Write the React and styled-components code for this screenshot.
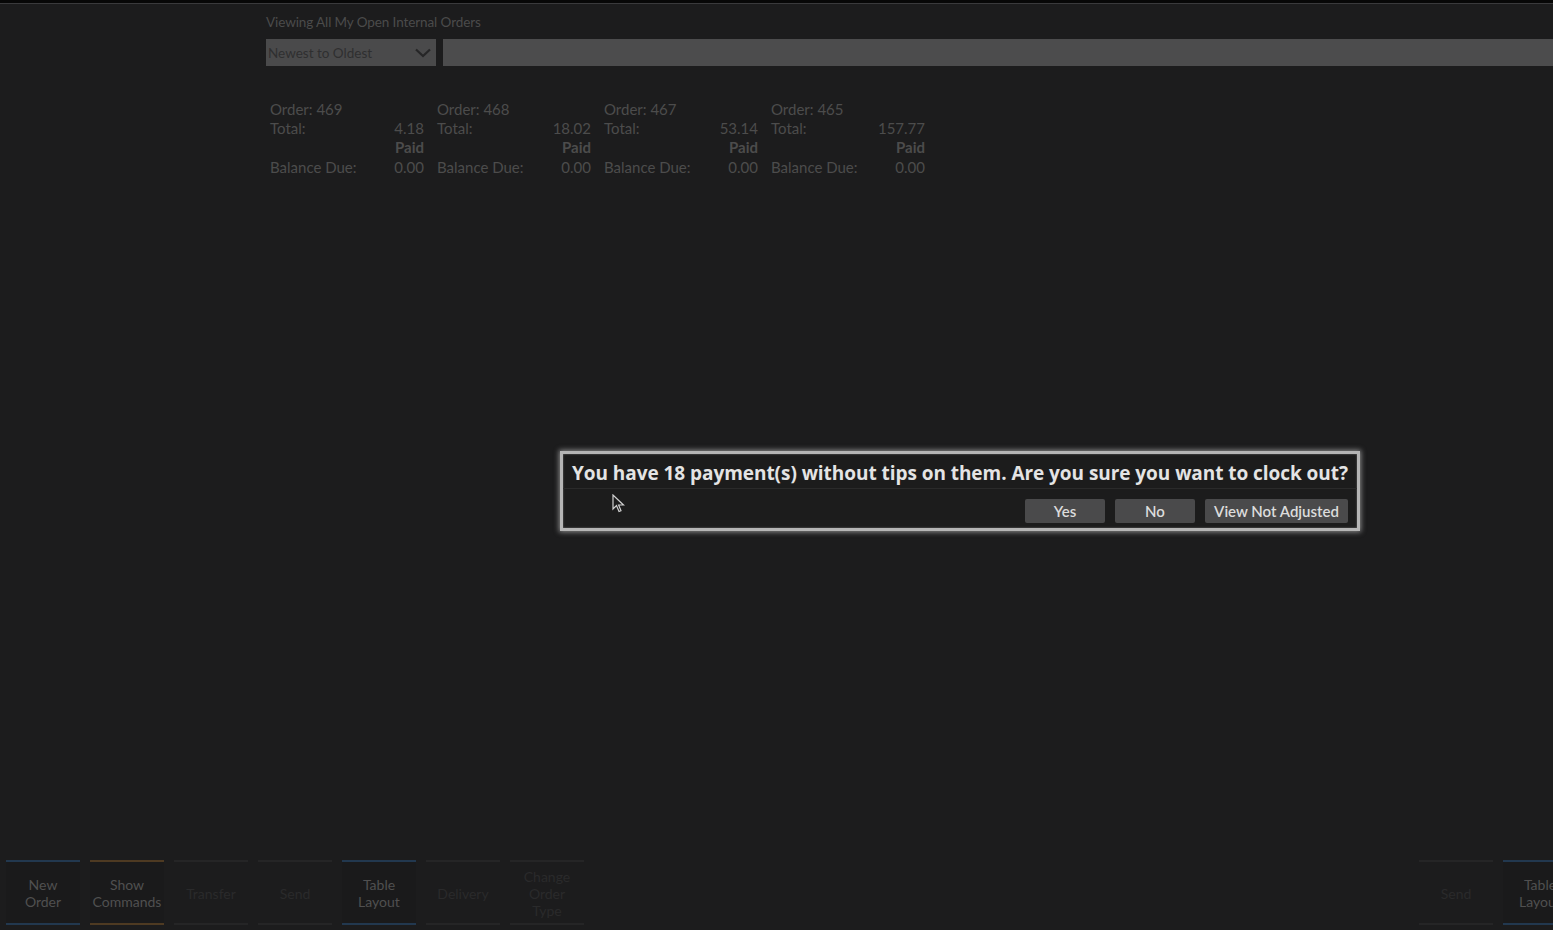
import React from "react";
import styled, { createGlobalStyle } from "styled-components";

const Global = createGlobalStyle`
  html, body { margin: 0; padding: 0; background: #1c1c1d; }
  body { font-family: "Lato", "Open Sans", sans-serif; overflow: hidden; }
  #root { height: 930px; }
`;

const Page = styled.div`
  position: relative;
  height: 930px;
  display: flex;
  flex-direction: column;
  background: #1c1c1d;
`;

const TopStrip = styled.div`
  height: 3px;
  background: #070707;
  border-bottom: 1px solid #3a3a3c;
  flex: none;
`;

const Body = styled.div`
  flex: 1;
  display: flex;
  min-height: 0;
`;

const Sidebar = styled.div`
  width: 266px;
  flex: none;
`;

const Main = styled.div`
  flex: 1;
  display: flex;
  flex-direction: column;
  padding-top: 11px;
`;

const Caption = styled.div`
  font-size: 13.5px;
  color: #4b4b4b;
  height: 20px;
  line-height: 14px;
  letter-spacing: -0.1px;
`;

const FilterRow = styled.div`
  display: flex;
  gap: 7px;
  height: 27px;
  margin-top: 4px;
`;

const Select = styled.div`
  width: 170px;
  flex: none;
  background: #4a4a4b;
  display: flex;
  align-items: center;
  justify-content: space-between;
  padding: 0 4px 0 2px;
  box-sizing: border-box;
  font-size: 13.5px;
  color: #2f2f30;
`;

const SearchBar = styled.div`
  flex: 1;
  background: #4c4c4d;
`;

const Orders = styled.div`
  display: flex;
  gap: 13px;
  padding: 34px 0 0 4px;
`;

const Card = styled.div`
  width: 154px;
  font-size: 15px;
  color: #4c4c4c;
  line-height: 19px;
`;

const CardRow = styled.div`
  display: flex;
  justify-content: space-between;
  height: ${(p) => (p.$tall ? "20px" : "19px")};
  font-weight: ${(p) => (p.$bold ? 700 : 400)};
`;

const Toolbar = styled.div`
  height: 68px;
  display: flex;
  justify-content: space-between;
  padding: 0 0 2px 6px;
  overflow: hidden;
  flex: none;
`;

const Group = styled.div`
  display: flex;
  gap: 10px;
  margin-right: ${(p) => p.$shift || "0"};
`;

const ToolButton = styled.div`
  width: 74px;
  height: 65px;
  box-sizing: border-box;
  border-top: 2px solid ${(p) => p.$line};
  border-bottom: 2px solid ${(p) => p.$line};
  display: flex;
  align-items: center;
  justify-content: center;
  text-align: center;
  font-size: 14px;
  line-height: 17px;
  padding-top: 1px;
  color: ${(p) => (p.$dim ? "#2a2a2b" : "#505050")};
  background: ${(p) => (p.$dim ? "transparent" : "#1a1a1b")};
`;

const Overlay = styled.div`
  position: absolute;
  left: 560px;
  top: 451px;
  width: 800px;
  height: 80px;
  box-sizing: border-box;
  border: 3px solid #b5b5b5;
  box-shadow: 0 0 5px 1px rgba(230, 230, 230, 0.55), inset 0 0 2px rgba(255,255,255,0.4);
  background: #1c1c1c;
  display: flex;
  flex-direction: column;
`;

const DialogTitle = styled.div`
  height: 35px;
  border-bottom: 1px solid #2a2a2a;
  display: flex;
  align-items: center;
  justify-content: center;
  font-family: "Open Sans", "Lato", sans-serif;
  font-weight: 700;
  font-size: 19px;
  color: #e4e4e4;
  letter-spacing: -0.05px;
  padding-top: 3px;
  box-sizing: border-box;
  white-space: nowrap;
`;

const DialogButtons = styled.div`
  display: flex;
  justify-content: flex-end;
  gap: 10px;
  padding: 10px 9px 0 0;
`;

const DialogButton = styled.div`
  height: 24px;
  min-width: ${(p) => p.$w || "80px"};
  padding: 0 8px;
  box-sizing: border-box;
  background: #4a4a4b;
  border-radius: 2px;
  color: #dcdcdc;
  font-size: 15px;
  font-weight: 600;
  display: flex;
  align-items: center;
  justify-content: center;
`;

const Cursor = styled.svg`
  position: absolute;
  left: 612px;
  top: 494px;
`;

const orders = [
  { id: 469, total: "4.18" },
  { id: 468, total: "18.02" },
  { id: 467, total: "53.14" },
  { id: 465, total: "157.77" },
];

const leftTools = [
  { label: ["New", "Order"], line: "#22384f" },
  { label: ["Show", "Commands"], line: "#4e3a22" },
  { label: ["Transfer"], line: "#252526", dim: true },
  { label: ["Send"], line: "#252526", dim: true },
  { label: ["Table", "Layout"], line: "#22384f" },
  { label: ["Delivery"], line: "#252526", dim: true },
  { label: ["Change", "Order", "Type"], line: "#252526", dim: true },
];

const rightTools = [
  { label: ["Send"], line: "#252526", dim: true },
  { label: ["Table", "Layout"], line: "#22384f" },
];

function Tool({ t }) {
  return (
    <ToolButton $line={t.line} $dim={t.dim}>
      <span>
        {t.label.map((l, i) => (
          <React.Fragment key={i}>
            {i > 0 && <br />}
            {l}
          </React.Fragment>
        ))}
      </span>
    </ToolButton>
  );
}

export default function App() {
  return (
    <>
      <Global />
      <Page>
        <TopStrip />
        <Body>
          <Sidebar />
          <Main>
            <Caption>Viewing All My Open Internal Orders</Caption>
            <FilterRow>
              <Select>
                <span>Newest to Oldest</span>
                <svg width="18" height="10" viewBox="0 0 18 10">
                  <path d="M2 1.5 L9 8 L16 1.5" fill="none" stroke="#262627" strokeWidth="2.2" />
                </svg>
              </Select>
              <SearchBar />
            </FilterRow>
            <Orders>
              {orders.map((o) => (
                <Card key={o.id}>
                  <CardRow>Order: {o.id}</CardRow>
                  <CardRow>
                    <span>Total:</span>
                    <span>{o.total}</span>
                  </CardRow>
                  <CardRow $bold $tall>
                    <span />
                    <span>Paid</span>
                  </CardRow>
                  <CardRow>
                    <span>Balance Due:</span>
                    <span>0.00</span>
                  </CardRow>
                </Card>
              ))}
            </Orders>
          </Main>
        </Body>
        <Toolbar>
          <Group>
            {leftTools.map((t, i) => (
              <Tool key={i} t={t} />
            ))}
          </Group>
          <Group $shift="-24px">
            {rightTools.map((t, i) => (
              <Tool key={i} t={t} />
            ))}
          </Group>
        </Toolbar>
        <Overlay>
          <DialogTitle>
            You have 18 payment(s) without tips on them. Are you sure you want to clock out?
          </DialogTitle>
          <DialogButtons>
            <DialogButton>Yes</DialogButton>
            <DialogButton>No</DialogButton>
            <DialogButton $w="143px">View Not Adjusted</DialogButton>
          </DialogButtons>
        </Overlay>
        <Cursor width="14" height="20" viewBox="0 0 14 20">
          <path d="M1 1 L1 15 L4.5 11.5 L7 17.5 L9 16.6 L6.6 11 L11.5 11 Z" fill="#1c1c1c" stroke="#d0d0d0" strokeWidth="1.2" />
        </Cursor>
      </Page>
    </>
  );
}
